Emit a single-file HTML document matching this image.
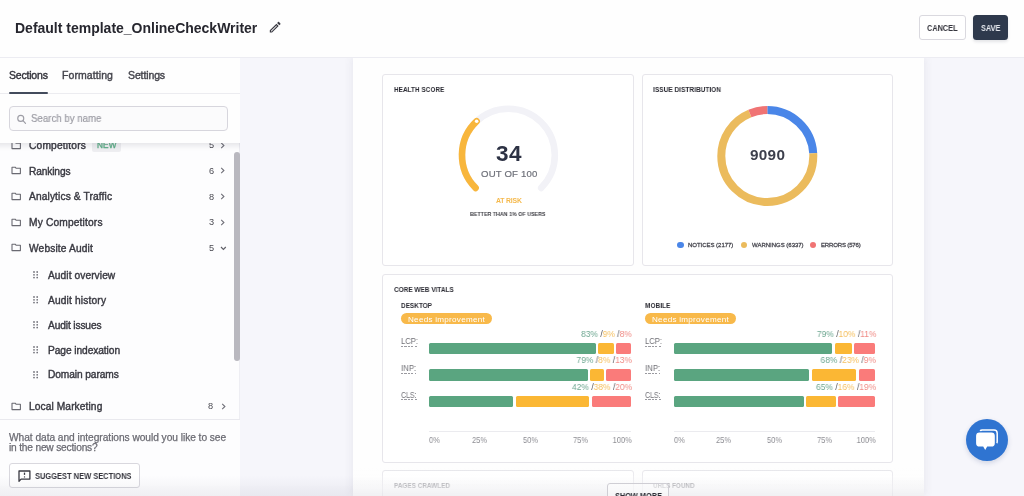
<!DOCTYPE html>
<html><head><meta charset="utf-8">
<style>
*{box-sizing:border-box;margin:0;padding:0}
html,body{width:1024px;height:496px;overflow:hidden;background:#f6f6fb;font-family:"Liberation Sans",sans-serif;position:relative}
.a{position:absolute;white-space:nowrap;line-height:normal;will-change:transform}
.m{-webkit-text-stroke:0.3px currentColor}
.b{position:absolute}
</style></head><body>
<div class='b' style='left:0;top:57px;width:240px;height:439px;background:#fdfdfe;border-right:1px solid #eeeef3'></div>
<div class='b' style='left:353px;top:57px;width:571px;height:439px;background:#fefefe;box-shadow:0 0 9px rgba(70,70,100,.10)'></div>
<div class='b' style='left:0;top:0;width:1024px;height:57.5px;background:#fefefe;border-bottom:1px solid #ececf2'></div>
<div class='a' style='left:15.00px;top:20.00px;font-size:14px;font-weight:700;color:#26262e;letter-spacing:-0.005px;'>Default template_OnlineCheckWriter</div>
<svg class='b' style='left:267.9px;top:19.9px' width='14.4' height='14.4' viewBox='0 0 24 24'><path fill='#3a3a42' d='M14.06 9.02l.92.92L5.92 19H5v-.92l9.06-9.06M17.66 3c-.25 0-.51.1-.7.29l-1.83 1.83 3.75 3.75 1.83-1.83c.39-.39.39-1.02 0-1.41l-2.34-2.34c-.2-.2-.45-.29-.71-.29zm-3.6 3.19L3 17.25V21h3.75L17.81 9.94l-3.75-3.75z'/></svg>
<div class='b' style='left:918.8px;top:15.2px;width:47.6px;height:24.6px;border:1px solid #dad9df;border-radius:3px;background:#fff'></div>
<div class='a' style='left:927.20px;top:23.00px;font-size:8.6px;font-weight:700;color:#34343c;letter-spacing:0.000px;transform:scaleX(0.8545);transform-origin:0 0;'>CANCEL</div>
<div class='b' style='left:972.8px;top:14.8px;width:35.2px;height:25.3px;border-radius:3.5px;background:#2e394c;box-shadow:0 2px 3px rgba(40,50,70,.12)'></div>
<div class='a' style='left:980.80px;top:23.00px;font-size:8.6px;font-weight:700;color:#e6e9ef;letter-spacing:0.000px;transform:scaleX(0.8522);transform-origin:0 0;'>SAVE</div>
<svg class='b' style='left:10.6px;top:140.5px' width='11' height='9' viewBox='0 0 11 9'><path d='M1 1.2 H4.2 L5.2 2.3 H9.4 V7.6 H1 Z' fill='none' stroke='#6a6a72' stroke-width='1.1' stroke-linejoin='round'/></svg>
<div class='a' style='left:28.80px;top:140.00px;font-size:10.2px;font-weight:400;color:#393941;letter-spacing:0.198px;-webkit-text-stroke:0.4px currentColor;'>Competitors</div>
<div class='a' style='left:208.60px;top:140.00px;font-size:9.2px;font-weight:400;color:#4a4a52;letter-spacing:0.000px;'>5</div>
<svg class='b' style='left:220.2px;top:141.5px' width='6' height='7' viewBox='0 0 6 7'><path d='M1.2 0.9 L3.9 3.5 L1.2 6.1' fill='none' stroke='#707078' stroke-width='1.1'/></svg>
<svg class='b' style='left:10.6px;top:166.4px' width='11' height='9' viewBox='0 0 11 9'><path d='M1 1.2 H4.2 L5.2 2.3 H9.4 V7.6 H1 Z' fill='none' stroke='#6a6a72' stroke-width='1.1' stroke-linejoin='round'/></svg>
<div class='a' style='left:28.80px;top:166.00px;font-size:10.2px;font-weight:400;color:#393941;letter-spacing:-0.136px;-webkit-text-stroke:0.4px currentColor;'>Rankings</div>
<div class='a' style='left:208.60px;top:166.00px;font-size:9.2px;font-weight:400;color:#4a4a52;letter-spacing:0.000px;'>6</div>
<svg class='b' style='left:220.2px;top:167.4px' width='6' height='7' viewBox='0 0 6 7'><path d='M1.2 0.9 L3.9 3.5 L1.2 6.1' fill='none' stroke='#707078' stroke-width='1.1'/></svg>
<svg class='b' style='left:10.6px;top:192.0px' width='11' height='9' viewBox='0 0 11 9'><path d='M1 1.2 H4.2 L5.2 2.3 H9.4 V7.6 H1 Z' fill='none' stroke='#6a6a72' stroke-width='1.1' stroke-linejoin='round'/></svg>
<div class='a' style='left:28.80px;top:191.00px;font-size:10.2px;font-weight:400;color:#393941;letter-spacing:0.127px;-webkit-text-stroke:0.4px currentColor;'>Analytics &amp; Traffic</div>
<div class='a' style='left:208.60px;top:192.00px;font-size:9.2px;font-weight:400;color:#4a4a52;letter-spacing:0.000px;'>8</div>
<svg class='b' style='left:220.2px;top:193.0px' width='6' height='7' viewBox='0 0 6 7'><path d='M1.2 0.9 L3.9 3.5 L1.2 6.1' fill='none' stroke='#707078' stroke-width='1.1'/></svg>
<svg class='b' style='left:10.6px;top:217.6px' width='11' height='9' viewBox='0 0 11 9'><path d='M1 1.2 H4.2 L5.2 2.3 H9.4 V7.6 H1 Z' fill='none' stroke='#6a6a72' stroke-width='1.1' stroke-linejoin='round'/></svg>
<div class='a' style='left:28.80px;top:217.00px;font-size:10.2px;font-weight:400;color:#393941;letter-spacing:0.169px;-webkit-text-stroke:0.4px currentColor;'>My Competitors</div>
<div class='a' style='left:208.60px;top:217.00px;font-size:9.2px;font-weight:400;color:#4a4a52;letter-spacing:0.000px;'>3</div>
<svg class='b' style='left:220.2px;top:218.6px' width='6' height='7' viewBox='0 0 6 7'><path d='M1.2 0.9 L3.9 3.5 L1.2 6.1' fill='none' stroke='#707078' stroke-width='1.1'/></svg>
<svg class='b' style='left:10.6px;top:243.2px' width='11' height='9' viewBox='0 0 11 9'><path d='M1 1.2 H4.2 L5.2 2.3 H9.4 V7.6 H1 Z' fill='none' stroke='#6a6a72' stroke-width='1.1' stroke-linejoin='round'/></svg>
<div class='a' style='left:28.80px;top:243.00px;font-size:10.2px;font-weight:400;color:#393941;letter-spacing:0.145px;-webkit-text-stroke:0.4px currentColor;'>Website Audit</div>
<div class='a' style='left:208.60px;top:243.00px;font-size:9.2px;font-weight:400;color:#4a4a52;letter-spacing:0.000px;'>5</div>
<svg class='b' style='left:219.5px;top:245.7px' width='7' height='5' viewBox='0 0 7 5'><path d='M1 1 L3.4 3.5 L5.8 1' fill='none' stroke='#606068' stroke-width='1.15'/></svg>
<div class='b' style='left:92px;top:139px;width:28.6px;height:12.5px;background:#eeeef1;border-radius:2px'></div>
<div class='a' style='left:96.70px;top:141.00px;font-size:8.2px;font-weight:400;color:#5fae88;letter-spacing:0.130px;-webkit-text-stroke:0.35px #5fae88;'>NEW</div>
<svg class='b' style='left:32.6px;top:271.20000000000005px' width='5.5' height='8' viewBox='0 0 5.5 8'><circle cx='1' cy='1' r='0.9' fill='#74747c'/><circle cx='1' cy='3.8' r='0.9' fill='#74747c'/><circle cx='1' cy='6.6' r='0.9' fill='#74747c'/><circle cx='4.2' cy='1' r='0.9' fill='#74747c'/><circle cx='4.2' cy='3.8' r='0.9' fill='#74747c'/><circle cx='4.2' cy='6.6' r='0.9' fill='#74747c'/></svg>
<div class='a' style='left:48.30px;top:270.00px;font-size:10.2px;font-weight:400;color:#393941;letter-spacing:0.075px;-webkit-text-stroke:0.4px currentColor;'>Audit overview</div>
<svg class='b' style='left:32.6px;top:296.1px' width='5.5' height='8' viewBox='0 0 5.5 8'><circle cx='1' cy='1' r='0.9' fill='#74747c'/><circle cx='1' cy='3.8' r='0.9' fill='#74747c'/><circle cx='1' cy='6.6' r='0.9' fill='#74747c'/><circle cx='4.2' cy='1' r='0.9' fill='#74747c'/><circle cx='4.2' cy='3.8' r='0.9' fill='#74747c'/><circle cx='4.2' cy='6.6' r='0.9' fill='#74747c'/></svg>
<div class='a' style='left:48.30px;top:295.00px;font-size:10.2px;font-weight:400;color:#393941;letter-spacing:0.164px;-webkit-text-stroke:0.4px currentColor;'>Audit history</div>
<svg class='b' style='left:32.6px;top:320.90000000000003px' width='5.5' height='8' viewBox='0 0 5.5 8'><circle cx='1' cy='1' r='0.9' fill='#74747c'/><circle cx='1' cy='3.8' r='0.9' fill='#74747c'/><circle cx='1' cy='6.6' r='0.9' fill='#74747c'/><circle cx='4.2' cy='1' r='0.9' fill='#74747c'/><circle cx='4.2' cy='3.8' r='0.9' fill='#74747c'/><circle cx='4.2' cy='6.6' r='0.9' fill='#74747c'/></svg>
<div class='a' style='left:48.30px;top:320.00px;font-size:10.2px;font-weight:400;color:#393941;letter-spacing:-0.128px;-webkit-text-stroke:0.4px currentColor;'>Audit issues</div>
<svg class='b' style='left:32.6px;top:345.8px' width='5.5' height='8' viewBox='0 0 5.5 8'><circle cx='1' cy='1' r='0.9' fill='#74747c'/><circle cx='1' cy='3.8' r='0.9' fill='#74747c'/><circle cx='1' cy='6.6' r='0.9' fill='#74747c'/><circle cx='4.2' cy='1' r='0.9' fill='#74747c'/><circle cx='4.2' cy='3.8' r='0.9' fill='#74747c'/><circle cx='4.2' cy='6.6' r='0.9' fill='#74747c'/></svg>
<div class='a' style='left:48.30px;top:345.00px;font-size:10.2px;font-weight:400;color:#393941;letter-spacing:-0.072px;-webkit-text-stroke:0.4px currentColor;'>Page indexation</div>
<svg class='b' style='left:32.6px;top:370.6px' width='5.5' height='8' viewBox='0 0 5.5 8'><circle cx='1' cy='1' r='0.9' fill='#74747c'/><circle cx='1' cy='3.8' r='0.9' fill='#74747c'/><circle cx='1' cy='6.6' r='0.9' fill='#74747c'/><circle cx='4.2' cy='1' r='0.9' fill='#74747c'/><circle cx='4.2' cy='3.8' r='0.9' fill='#74747c'/><circle cx='4.2' cy='6.6' r='0.9' fill='#74747c'/></svg>
<div class='a' style='left:48.30px;top:369.00px;font-size:10.2px;font-weight:400;color:#393941;letter-spacing:-0.093px;-webkit-text-stroke:0.4px currentColor;'>Domain params</div>
<svg class='b' style='left:10.6px;top:401.5px' width='11' height='9' viewBox='0 0 11 9'><path d='M1 1.2 H4.2 L5.2 2.3 H9.4 V7.6 H1 Z' fill='none' stroke='#6a6a72' stroke-width='1.1' stroke-linejoin='round'/></svg>
<div class='a' style='left:28.60px;top:401.00px;font-size:10.2px;font-weight:400;color:#393941;letter-spacing:0.099px;-webkit-text-stroke:0.4px currentColor;'>Local Marketing</div>
<div class='a' style='left:208.40px;top:401.00px;font-size:9.2px;font-weight:400;color:#4a4a52;letter-spacing:0.000px;'>8</div>
<svg class='b' style='left:220.6px;top:402.5px' width='6' height='7' viewBox='0 0 6 7'><path d='M1.2 0.9 L3.9 3.5 L1.2 6.1' fill='none' stroke='#707078' stroke-width='1.1'/></svg>
<div class='b' style='left:234.2px;top:152.4px;width:5.7px;height:208.2px;border-radius:3px;background:#b9b8bf'></div>
<div class='b' style='left:0;top:58px;width:240px;height:100px;overflow:hidden'><div class='b' style='left:-10px;top:0;width:260px;height:84.6px;background:#fefefe;box-shadow:0 2px 6px rgba(60,60,80,.15)'></div></div>
<div class='a' style='left:8.80px;top:69.00px;font-size:10.5px;font-weight:400;color:#33333b;letter-spacing:-0.198px;-webkit-text-stroke:0.4px currentColor;'>Sections</div>
<div class='a' style='left:62.40px;top:69.00px;font-size:10.5px;font-weight:400;color:#44444c;letter-spacing:0.081px;-webkit-text-stroke:0.4px currentColor;'>Formatting</div>
<div class='a' style='left:128.30px;top:69.00px;font-size:10.5px;font-weight:400;color:#44444c;letter-spacing:-0.119px;-webkit-text-stroke:0.4px currentColor;'>Settings</div>
<div class='b' style='left:0;top:93px;width:240px;height:1px;background:#ececf0'></div>
<div class='b' style='left:8.6px;top:91.6px;width:39.4px;height:2.1px;background:#434b5c;border-radius:1px'></div>
<div class='b' style='left:9.4px;top:106.1px;width:218.5px;height:24.9px;border:1px solid #d7d6dd;border-radius:4px;background:#fbfbfc'></div>
<svg class='b' style='left:16px;top:113.5px' width='12' height='12' viewBox='0 0 12 12'><circle cx='4.75' cy='4.4' r='3.0' fill='none' stroke='#9d9da5' stroke-width='1.15'/><path d='M7 6.7 L9.5 9.3' stroke='#9d9da5' stroke-width='1.2' stroke-linecap='round'/></svg>
<div class='a' style='left:31.30px;top:112.00px;font-size:10.6px;font-weight:400;color:#9b9ba3;letter-spacing:0.000px;transform:scaleX(0.9124);transform-origin:0 0;-webkit-text-stroke:0.2px #9b9ba3;'>Search by name</div>
<div class='b' style='left:0;top:418.8px;width:240px;height:77.2px;background:#fdfdfe;border-top:1px solid #e9e9ee'></div>
<div class='a' style='left:8.90px;top:432.00px;font-size:10.2px;font-weight:400;color:#6a6a72;letter-spacing:-0.043px;-webkit-text-stroke:0.25px currentColor;'>What data and integrations would you like to see</div>
<div class='a' style='left:8.90px;top:442.00px;font-size:10.2px;font-weight:400;color:#6a6a72;letter-spacing:-0.191px;-webkit-text-stroke:0.25px currentColor;'>in the new sections?</div>
<div class='b' style='left:8.9px;top:463.4px;width:131.1px;height:24.6px;border:1px solid #d9d8de;border-radius:3px;background:#fff'></div>
<svg class='b' style='left:17.5px;top:469.5px' width='14' height='13' viewBox='0 0 14 13'><path d='M1 11.2 V1 H11.9 V9.1 H3.1 Z' fill='none' stroke='#3a3a42' stroke-width='1.3' stroke-linejoin='round'/><path d='M6.5 2.6 V4.9' stroke='#3a3a42' stroke-width='1.3'/><circle cx='6.5' cy='6.9' r='0.7' fill='#3a3a42'/></svg>
<div class='a' style='left:35.30px;top:472.00px;font-size:8.2px;font-weight:700;color:#34343c;letter-spacing:0.000px;transform:scaleX(0.9143);transform-origin:0 0;'>SUGGEST NEW SECTIONS</div>
<div class='b' style='left:382.4px;top:73.6px;width:251.60000000000002px;height:192.4px;border:1px solid #e7e6eb;border-radius:3px;background:#fff'></div>
<div class='b' style='left:641.8px;top:73.6px;width:251.70000000000005px;height:192.4px;border:1px solid #e7e6eb;border-radius:3px;background:#fff'></div>
<div class='b' style='left:382.4px;top:274.3px;width:511.1px;height:188.3px;border:1px solid #e7e6eb;border-radius:3px;background:#fff'></div>
<div class='b' style='left:382.4px;top:470px;width:251.60000000000002px;height:50px;border:1px solid #e7e6eb;border-radius:3px;background:#fff'></div>
<div class='b' style='left:641.8px;top:470px;width:251.70000000000005px;height:50px;border:1px solid #e7e6eb;border-radius:3px;background:#fff'></div>
<div class='a' style='left:393.90px;top:85.00px;font-size:7.7px;font-weight:700;color:#2c2c34;letter-spacing:0.000px;transform:scaleX(0.8372);transform-origin:0 0;'>HEALTH SCORE</div>
<div class='a' style='left:653.00px;top:85.00px;font-size:7.7px;font-weight:700;color:#2c2c34;letter-spacing:0.000px;transform:scaleX(0.8513);transform-origin:0 0;'>ISSUE DISTRIBUTION</div>
<svg class='b' style='left:0;top:0' width='1024' height='496'><path d='M475.59 187.91 A46.4 46.4 0 1 1 541.21 187.91' fill='none' stroke='#f2f2f7' stroke-width='6.6' stroke-linecap='round'/><path d='M475.59 187.91 A46.4 46.4 0 0 1 476.64 121.28' fill='none' stroke='#f8b63c' stroke-width='6.6' stroke-linecap='round'/><circle cx='476.64' cy='121.28' r='1.8' fill='#fff'/></svg>
<div class='a' style='left:496.00px;top:141.00px;font-size:22.5px;font-weight:700;color:#2d3244;letter-spacing:0.434px;'>34</div>
<div class='a' style='left:480.60px;top:168.00px;font-size:9.6px;font-weight:400;color:#6e7079;letter-spacing:0.165px;-webkit-text-stroke:0.2px #6e7079;'>OUT OF 100</div>
<div class='a' style='left:495.90px;top:197.00px;font-size:6.9px;font-weight:700;color:#f5b94c;letter-spacing:-0.180px;'>AT RISK</div>
<div class='a' style='left:470.40px;top:211.00px;font-size:5.9px;font-weight:700;color:#3a3a40;letter-spacing:0.000px;transform:scaleX(0.9045);transform-origin:0 0;'>BETTER THAN 1% OF USERS</div>
<svg class='b' style='left:0;top:0' width='1024' height='496'><g transform='rotate(-90 767.3 156.0)'><circle cx='767.3' cy='156.0' r='46.0' fill='none' stroke='#4a86e8' stroke-width='8.0' stroke-dasharray='69.220 289.027' stroke-dashoffset='0.000'/><circle cx='767.3' cy='156.0' r='46.0' fill='none' stroke='#ebbb5d' stroke-width='8.0' stroke-dasharray='201.492 289.027' stroke-dashoffset='-69.220'/><circle cx='767.3' cy='156.0' r='46.0' fill='none' stroke='#f07474' stroke-width='8.0' stroke-dasharray='18.315 289.027' stroke-dashoffset='-270.712'/></g></svg>
<div class='a' style='left:749.50px;top:146.00px;font-size:15.3px;font-weight:700;color:#3c3f4c;letter-spacing:0.292px;'>9090</div>
<div class='b' style='left:677.4px;top:241.9px;width:6.2px;height:6.2px;border-radius:50%;background:#4a86e8'></div>
<div class='b' style='left:740.5px;top:241.9px;width:6.2px;height:6.2px;border-radius:50%;background:#ebbb5d'></div>
<div class='b' style='left:810.1px;top:241.9px;width:6.2px;height:6.2px;border-radius:50%;background:#f07474'></div>
<div class='a' style='left:688.20px;top:242.00px;font-size:6.0px;font-weight:400;color:#4a4a52;letter-spacing:-0.028px;-webkit-text-stroke:0.28px #4a4a52;'>NOTICES (2177)</div>
<div class='a' style='left:751.60px;top:242.00px;font-size:6.0px;font-weight:400;color:#4a4a52;letter-spacing:-0.013px;-webkit-text-stroke:0.28px #4a4a52;'>WARNINGS (6337)</div>
<div class='a' style='left:820.80px;top:242.00px;font-size:6.0px;font-weight:400;color:#4a4a52;letter-spacing:-0.145px;-webkit-text-stroke:0.28px #4a4a52;'>ERRORS (576)</div>
<div class='a' style='left:393.80px;top:285.00px;font-size:7.3px;font-weight:700;color:#2c2c34;letter-spacing:0.000px;transform:scaleX(0.8834);transform-origin:0 0;'>CORE WEB VITALS</div>
<div class='a' style='left:401.00px;top:301.00px;font-size:7.8px;font-weight:700;color:#2c2c34;letter-spacing:0.000px;transform:scaleX(0.8253);transform-origin:0 0;'>DESKTOP</div>
<div class='b' style='left:400.5px;top:312.9px;width:91.8px;height:11.6px;border-radius:6px;background:#f8b94a'></div>
<div class='a' style='left:408.40px;top:315.00px;font-size:8.1px;font-weight:400;color:#ffffff;letter-spacing:0.268px;'>Needs improvement</div>
<div class='a' style='left:401.00px;top:336.00px;font-size:8.9px;font-weight:400;color:#707076;letter-spacing:0.000px;transform:scaleX(0.8614);transform-origin:0 0;'>LCP:</div>
<div class='b' style='left:401.0px;top:345.6px;width:17.0px;height:1px;background:repeating-linear-gradient(90deg,#9a9aa0 0 2.1px,transparent 2.1px 3.4px)'></div>
<div class='b' style='left:429.40px;top:342.80px;width:166.36px;height:11.3px;border-radius:1.5px;background:#5aa580'></div>
<div class='b' style='left:598.16px;top:342.80px;width:15.73px;height:11.3px;border-radius:1.5px;background:#fbb734'></div>
<div class='b' style='left:616.29px;top:342.80px;width:14.51px;height:11.3px;border-radius:1.5px;background:#fa7b7a'></div>
<div class='a' style='left:576.27px;top:329.00px;font-size:9.3px;font-weight:400;color:#666;letter-spacing:0.000px;transform:scaleX(0.91);transform-origin:100% 0;'><span style="color:#6fa892">83%</span><span style="color:#55555b"> /</span><span style="color:#f5c060">9%</span><span style="color:#55555b"> /</span><span style="color:#f08c86">8%</span></div>
<div class='a' style='left:401.00px;top:363.00px;font-size:8.9px;font-weight:400;color:#707076;letter-spacing:0.000px;transform:scaleX(0.8804);transform-origin:0 0;'>INP:</div>
<div class='b' style='left:401.0px;top:372.5px;width:15.2px;height:1px;background:repeating-linear-gradient(90deg,#9a9aa0 0 2.1px,transparent 2.1px 3.4px)'></div>
<div class='b' style='left:429.40px;top:369.40px;width:158.11px;height:11.3px;border-radius:1.5px;background:#5aa580'></div>
<div class='b' style='left:589.91px;top:369.40px;width:13.71px;height:11.3px;border-radius:1.5px;background:#fbb734'></div>
<div class='b' style='left:606.02px;top:369.40px;width:24.78px;height:11.3px;border-radius:1.5px;background:#fa7b7a'></div>
<div class='a' style='left:571.10px;top:355.00px;font-size:9.3px;font-weight:400;color:#666;letter-spacing:0.000px;transform:scaleX(0.91);transform-origin:100% 0;'><span style="color:#6fa892">79%</span><span style="color:#55555b"> /</span><span style="color:#f5c060">8%</span><span style="color:#55555b"> /</span><span style="color:#f08c86">13%</span></div>
<div class='a' style='left:401.00px;top:390.00px;font-size:8.9px;font-weight:400;color:#707076;letter-spacing:0.000px;transform:scaleX(0.7905);transform-origin:0 0;'>CLS:</div>
<div class='b' style='left:401.0px;top:399.40000000000003px;width:15.6px;height:1px;background:repeating-linear-gradient(90deg,#9a9aa0 0 2.1px,transparent 2.1px 3.4px)'></div>
<div class='b' style='left:429.40px;top:396.00px;width:83.79px;height:11.3px;border-radius:1.5px;background:#5aa580'></div>
<div class='b' style='left:515.59px;top:396.00px;width:73.73px;height:11.3px;border-radius:1.5px;background:#fbb734'></div>
<div class='b' style='left:591.72px;top:396.00px;width:39.08px;height:11.3px;border-radius:1.5px;background:#fa7b7a'></div>
<div class='a' style='left:565.93px;top:382.00px;font-size:9.3px;font-weight:400;color:#666;letter-spacing:0.000px;transform:scaleX(0.91);transform-origin:100% 0;'><span style="color:#6fa892">42%</span><span style="color:#55555b"> /</span><span style="color:#f5c060">38%</span><span style="color:#55555b"> /</span><span style="color:#f08c86">20%</span></div>
<div class='b' style='left:429.4px;top:431px;width:201.39999999999998px;height:1px;background:#ebebef'></div>
<div class='a' style='left:429.40px;top:435.00px;font-size:8.5px;font-weight:400;color:#8d8d93;letter-spacing:0.000px;transform:scaleX(0.88);transform-origin:0 0;'>0%</div>
<div class='a' style='left:471.24px;top:435.00px;font-size:8.5px;font-weight:400;color:#8d8d93;letter-spacing:0.000px;transform:scaleX(0.88);transform-origin:50% 0;'>25%</div>
<div class='a' style='left:521.59px;top:435.00px;font-size:8.5px;font-weight:400;color:#8d8d93;letter-spacing:0.000px;transform:scaleX(0.88);transform-origin:50% 0;'>50%</div>
<div class='a' style='left:571.94px;top:435.00px;font-size:8.5px;font-weight:400;color:#8d8d93;letter-spacing:0.000px;transform:scaleX(0.88);transform-origin:50% 0;'>75%</div>
<div class='a' style='left:609.55px;top:435.00px;font-size:8.5px;font-weight:400;color:#8d8d93;letter-spacing:0.000px;transform:scaleX(0.88);transform-origin:100% 0;'>100%</div>
<div class='a' style='left:645.00px;top:301.00px;font-size:7.8px;font-weight:700;color:#2c2c34;letter-spacing:0.000px;transform:scaleX(0.8408);transform-origin:0 0;'>MOBILE</div>
<div class='b' style='left:644.5px;top:312.9px;width:91.8px;height:11.6px;border-radius:6px;background:#f8b94a'></div>
<div class='a' style='left:652.40px;top:315.00px;font-size:8.1px;font-weight:400;color:#ffffff;letter-spacing:0.268px;'>Needs improvement</div>
<div class='a' style='left:645.00px;top:336.00px;font-size:8.9px;font-weight:400;color:#707076;letter-spacing:0.000px;transform:scaleX(0.8614);transform-origin:0 0;'>LCP:</div>
<div class='b' style='left:645.0px;top:345.6px;width:17.0px;height:1px;background:repeating-linear-gradient(90deg,#9a9aa0 0 2.1px,transparent 2.1px 3.4px)'></div>
<div class='b' style='left:673.70px;top:342.80px;width:158.47px;height:11.3px;border-radius:1.5px;background:#5aa580'></div>
<div class='b' style='left:834.57px;top:342.80px;width:17.51px;height:11.3px;border-radius:1.5px;background:#fbb734'></div>
<div class='b' style='left:854.48px;top:342.80px;width:20.32px;height:11.3px;border-radius:1.5px;background:#fa7b7a'></div>
<div class='a' style='left:810.62px;top:329.00px;font-size:9.3px;font-weight:400;color:#666;letter-spacing:0.000px;transform:scaleX(0.91);transform-origin:100% 0;'><span style="color:#6fa892">79%</span><span style="color:#55555b"> /</span><span style="color:#f5c060">10%</span><span style="color:#55555b"> /</span><span style="color:#f08c86">11%</span></div>
<div class='a' style='left:645.00px;top:363.00px;font-size:8.9px;font-weight:400;color:#707076;letter-spacing:0.000px;transform:scaleX(0.8804);transform-origin:0 0;'>INP:</div>
<div class='b' style='left:645.0px;top:372.5px;width:15.2px;height:1px;background:repeating-linear-gradient(90deg,#9a9aa0 0 2.1px,transparent 2.1px 3.4px)'></div>
<div class='b' style='left:673.70px;top:369.40px;width:135.75px;height:11.3px;border-radius:1.5px;background:#5aa580'></div>
<div class='b' style='left:811.85px;top:369.40px;width:44.46px;height:11.3px;border-radius:1.5px;background:#fbb734'></div>
<div class='b' style='left:858.71px;top:369.40px;width:16.09px;height:11.3px;border-radius:1.5px;background:#fa7b7a'></div>
<div class='a' style='left:815.10px;top:355.00px;font-size:9.3px;font-weight:400;color:#666;letter-spacing:0.000px;transform:scaleX(0.91);transform-origin:100% 0;'><span style="color:#6fa892">68%</span><span style="color:#55555b"> /</span><span style="color:#f5c060">23%</span><span style="color:#55555b"> /</span><span style="color:#f08c86">9%</span></div>
<div class='a' style='left:645.00px;top:390.00px;font-size:8.9px;font-weight:400;color:#707076;letter-spacing:0.000px;transform:scaleX(0.7905);transform-origin:0 0;'>CLS:</div>
<div class='b' style='left:645.0px;top:399.40000000000003px;width:15.6px;height:1px;background:repeating-linear-gradient(90deg,#9a9aa0 0 2.1px,transparent 2.1px 3.4px)'></div>
<div class='b' style='left:673.70px;top:396.00px;width:129.92px;height:11.3px;border-radius:1.5px;background:#5aa580'></div>
<div class='b' style='left:806.02px;top:396.00px;width:29.98px;height:11.3px;border-radius:1.5px;background:#fbb734'></div>
<div class='b' style='left:838.39px;top:396.00px;width:36.41px;height:11.3px;border-radius:1.5px;background:#fa7b7a'></div>
<div class='a' style='left:809.93px;top:382.00px;font-size:9.3px;font-weight:400;color:#666;letter-spacing:0.000px;transform:scaleX(0.91);transform-origin:100% 0;'><span style="color:#6fa892">65%</span><span style="color:#55555b"> /</span><span style="color:#f5c060">16%</span><span style="color:#55555b"> /</span><span style="color:#f08c86">19%</span></div>
<div class='b' style='left:673.7px;top:431px;width:201.0999999999999px;height:1px;background:#ebebef'></div>
<div class='a' style='left:673.70px;top:435.00px;font-size:8.5px;font-weight:400;color:#8d8d93;letter-spacing:0.000px;transform:scaleX(0.88);transform-origin:0 0;'>0%</div>
<div class='a' style='left:715.47px;top:435.00px;font-size:8.5px;font-weight:400;color:#8d8d93;letter-spacing:0.000px;transform:scaleX(0.88);transform-origin:50% 0;'>25%</div>
<div class='a' style='left:765.74px;top:435.00px;font-size:8.5px;font-weight:400;color:#8d8d93;letter-spacing:0.000px;transform:scaleX(0.88);transform-origin:50% 0;'>50%</div>
<div class='a' style='left:816.02px;top:435.00px;font-size:8.5px;font-weight:400;color:#8d8d93;letter-spacing:0.000px;transform:scaleX(0.88);transform-origin:50% 0;'>75%</div>
<div class='a' style='left:853.55px;top:435.00px;font-size:8.5px;font-weight:400;color:#8d8d93;letter-spacing:0.000px;transform:scaleX(0.88);transform-origin:100% 0;'>100%</div>
<div class='a' style='left:393.80px;top:481.00px;font-size:7.5px;font-weight:700;color:#808087;letter-spacing:0.000px;transform:scaleX(0.8523);transform-origin:0 0;'>PAGES CRAWLED</div>
<div class='a' style='left:653.30px;top:481.00px;font-size:7.5px;font-weight:700;color:#808087;letter-spacing:0.000px;transform:scaleX(0.8460);transform-origin:0 0;'>URLS FOUND</div>
<div class='b' style='left:353px;top:468px;width:571px;height:28px;background:linear-gradient(rgba(255,255,255,0),rgba(255,255,255,.6) 70%,rgba(255,255,255,.6))'></div>
<div class='b' style='left:0;top:476px;width:924px;height:20px;background:linear-gradient(rgba(90,90,120,0),rgba(90,90,120,.085))'></div>
<div class='b' style='left:606.7px;top:483.4px;width:62.6px;height:20px;border:1px solid #cfced4;border-radius:3px;background:rgba(255,255,255,.35)'></div>
<div class='a' style='left:614.80px;top:491.00px;font-size:8.6px;font-weight:700;color:#2e2e36;letter-spacing:0.000px;transform:scaleX(0.8560);transform-origin:0 0;'>SHOW MORE</div>
<div class='b' style='left:965.7px;top:418.8px;width:42.6px;height:42.6px;border-radius:50%;background:#2f74d1;box-shadow:0 2px 5px rgba(40,60,120,.18)'></div>
<svg class='b' style='left:970px;top:424px' width='34' height='34' viewBox='0 0 34 34'><path d='M10.2 7 Q10.6 6.1 12.2 6.1 H24 Q27.2 6.1 27.2 9.3 V17.6 Q27.2 18.6 26.7 19.1' fill='none' stroke='#fff' stroke-width='1.5'/><path d='M9.6 8.4 H21.4 Q24.8 8.4 24.8 11.8 V19.2 Q24.8 22.6 21.4 22.6 H17.2 L15.2 26.1 L13.2 22.6 H9.6 Q6.1 22.6 6.1 19.2 V11.8 Q6.1 8.4 9.6 8.4 Z' fill='#fff'/></svg>
</body></html>
